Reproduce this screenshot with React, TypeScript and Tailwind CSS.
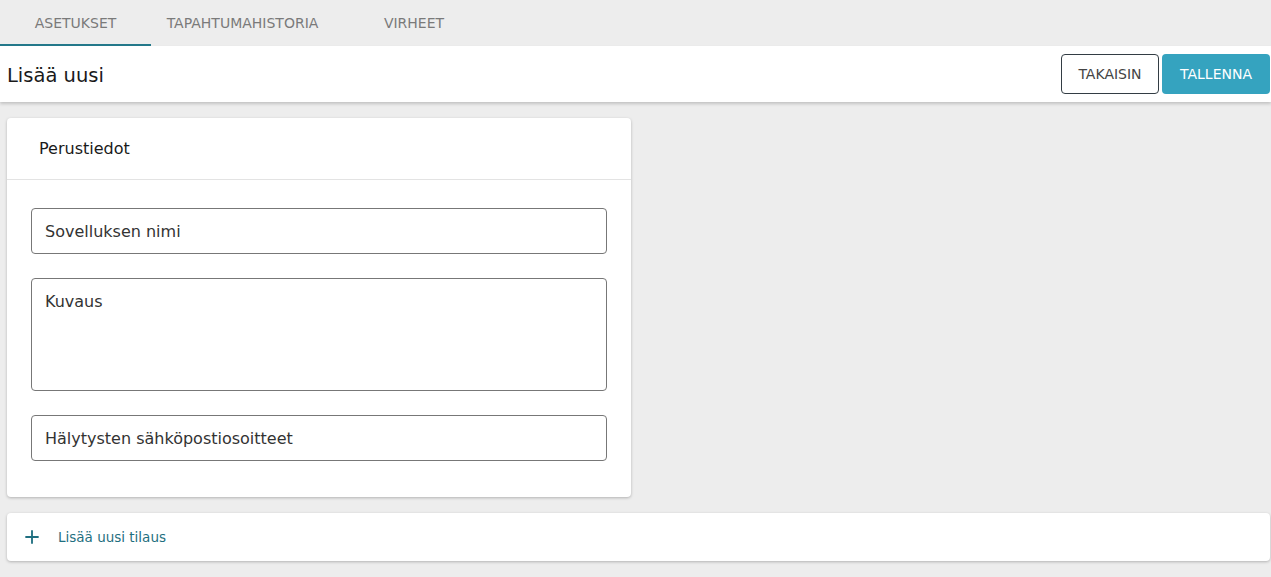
import React from "react";

const font = { fontFamily: '"DejaVu Sans", "Open Sans", sans-serif' };

export default function App() {
  return (
    <div className="min-h-[577px] bg-[#ededed] text-[#222]" style={font}>
      <div className="flex h-[46px] bg-[#ededed]">
        <div className="relative flex w-[151px] items-center justify-center pt-[1px] text-[14px] text-[#7a7a7a]">
          ASETUKSET
          <div className="absolute bottom-0 left-0 h-[2px] w-full bg-[#23788a]" />
        </div>
        <div className="flex w-[183px] items-center justify-center pt-[1px] text-[14px] text-[#7a7a7a]">
          TAPAHTUMAHISTORIA
        </div>
        <div className="flex w-[160px] items-center justify-center pt-[1px] text-[14px] text-[#7a7a7a]">
          VIRHEET
        </div>
      </div>
      <div className="flex h-[56px] items-center justify-between bg-white pl-[7px] pr-[1px] shadow-[0_2px_3px_rgba(0,0,0,0.18)]">
        <div className="pt-[3px] text-[19.5px] text-[#1a1a1a]">Lisää uusi</div>
        <div className="flex gap-[3px]">
          <button className="h-[40px] w-[98px] rounded-[4px] border border-[#333d44] bg-white text-[14px] text-[#444]">
            TAKAISIN
          </button>
          <button className="h-[40px] w-[108px] rounded-[4px] bg-[#35a3bf] text-[14px] text-white">
            TALLENNA
          </button>
        </div>
      </div>
      <div className="pl-[7px] pr-[1px] pt-[16px] pb-[16px]">
        <div className="w-[624px] rounded-[4px] bg-white shadow-[0_1px_3px_rgba(0,0,0,0.25)]">
          <div className="flex h-[62px] items-center border-b border-[#e3e3e3] pl-[32px] pt-[1px] text-[16px] font-medium text-[#1a1a1a]">
            Perustiedot
          </div>
          <div className="flex flex-col gap-[24px] px-[24px] pt-[28px] pb-[36px]">
            <div className="flex h-[46px] items-center rounded-[4px] border border-[#777] px-[13px] pt-[1px] text-[16px] text-[#333]">
              Sovelluksen nimi
            </div>
            <div className="h-[113px] rounded-[4px] border border-[#777] px-[13px] pt-[11px] text-[16px] text-[#333]">
              Kuvaus
            </div>
            <div className="flex h-[46px] items-center rounded-[4px] border border-[#777] px-[13px] pt-[1px] text-[16px] text-[#333]">
              Hälytysten sähköpostiosoitteet
            </div>
          </div>
        </div>
        <div className="mt-[16px] flex h-[48px] items-center gap-[16px] rounded-[4px] bg-white pl-[15px] shadow-[0_1px_3px_rgba(0,0,0,0.25)]">
          <svg width="20" height="20" viewBox="0 0 24 24" fill="none" stroke="#1f6f80" strokeWidth="2.2">
            <path d="M12 4v16M4 12h16" />
          </svg>
          <span className="text-[13.5px] font-medium text-[#1f6f80]">Lisää uusi tilaus</span>
        </div>
      </div>
    </div>
  );
}
